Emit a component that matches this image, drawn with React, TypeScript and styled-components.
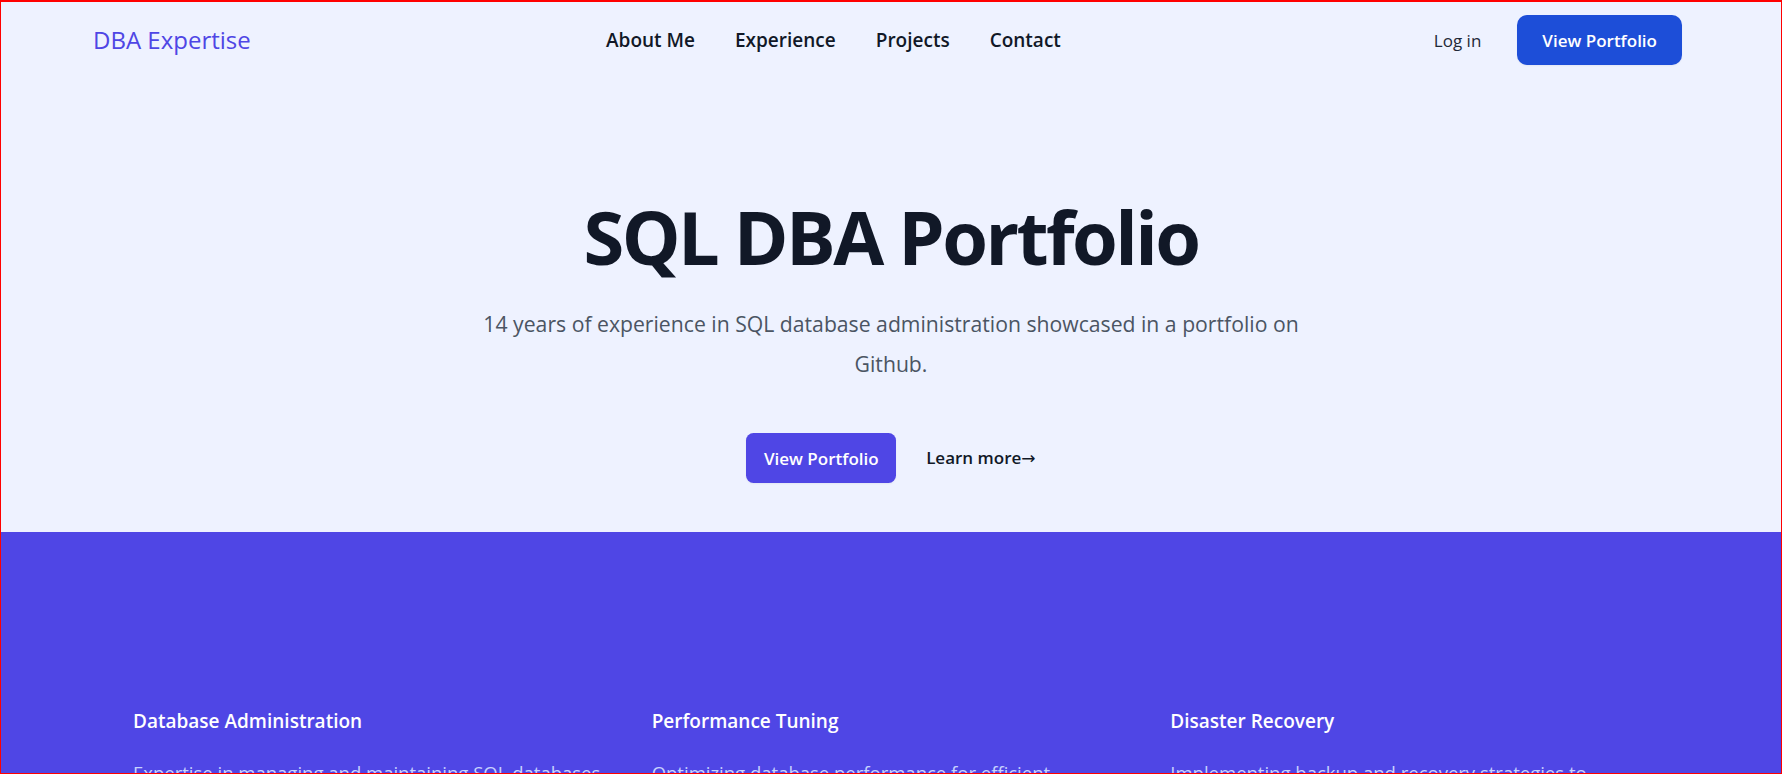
import React from "react";
import styled, { createGlobalStyle } from "styled-components";

const GlobalStyle = createGlobalStyle`
  * { box-sizing: border-box; }
  html, body { margin: 0; padding: 0; }
  body {
    font-family: "Open Sans", "Noto Sans", sans-serif;
    background: #eef2ff;
    color: #111827;
    -webkit-font-smoothing: antialiased;
  }
  body::after {
    content: "";
    position: fixed;
    inset: 0;
    border: 1px solid #ff0000;
    border-top-width: 2px;
    pointer-events: none;
    z-index: 10;
  }
`;

const Page = styled.div`
  min-height: 100vh;
`;

const Header = styled.header`
  display: grid;
  grid-template-columns: 513px auto 1fr;
  align-items: center;
  padding: 15px 100px 0 93px;
`;

const Logo = styled.a`
  font-size: 24px;
  font-weight: 500;
  color: #4f46e5;
  text-decoration: none;
  line-height: 50px;
`;

const NavLinks = styled.nav`
  display: flex;
  gap: 40px;
`;

const NavLink = styled.a`
  font-size: 19px;
  font-weight: 600;
  color: #111827;
  text-decoration: none;
`;

const RightGroup = styled.div`
  justify-self: end;
  display: flex;
  align-items: center;
  gap: 36px;
`;

const LoginLink = styled.a`
  font-size: 17px;
  font-weight: 500;
  color: #1f2937;
  text-decoration: none;
`;

const Button = styled.a<{ $variant: "blue" | "indigo" }>`
  display: inline-block;
  background: ${(p) => (p.$variant === "blue" ? "#1d4ed8" : "#4f46e5")};
  color: #ffffff;
  font-size: 17px;
  font-weight: 600;
  line-height: 25px;
  padding: 12.5px ${(p) => (p.$variant === "blue" ? "25px" : "17.5px")};
  border-radius: ${(p) => (p.$variant === "blue" ? "10px" : "7.5px")};
  text-decoration: none;
  box-shadow: 0 1px 2px rgba(0, 0, 0, 0.05);
`;

const Hero = styled.section`
  padding: 133px 24px 49px;
  text-align: center;
`;

const Title = styled.h1`
  margin: 0;
  font-size: 74px;
  line-height: 77px;
  font-weight: 700;
  letter-spacing: -0.035em;
  color: #111827;
`;

const Subtitle = styled.p`
  max-width: 840px;
  margin: 29px auto 0;
  font-size: 21.2px;
  line-height: 40px;
  color: #4b5563;
`;

const Actions = styled.div`
  margin-top: 49px;
  display: flex;
  justify-content: center;
  align-items: center;
  gap: 30px;
`;

const LearnMore = styled.a`
  font-size: 17px;
  font-weight: 600;
  line-height: 25px;
  color: #111827;
  text-decoration: none;
`;

const Arrow = styled.span`
  font-family: "DejaVu Sans", sans-serif;
  font-weight: 400;
  font-size: 17px;
`;

const Features = styled.section`
  background: #4f46e5;
  padding: 172px 133px 160px;
  display: grid;
  grid-template-columns: repeat(3, 1fr);
  gap: 40px;
`;

const Feature = styled.div``;

const FeatureTitle = styled.h3`
  margin: 0;
  font-size: 19px;
  font-weight: 600;
  line-height: 35px;
  color: #ffffff;
`;

const FeatureText = styled.p`
  margin: 16px 0 0;
  font-size: 18.5px;
  line-height: 35px;
  color: #c7d2fe;
`;

const features = [
  {
    title: "Database Administration",
    text: "Expertise in managing and maintaining SQL databases for optimal reliability and availability.",
  },
  {
    title: "Performance Tuning",
    text: "Optimizing database performance for efficient operations and fast query response.",
  },
  {
    title: "Disaster Recovery",
    text: "Implementing backup and recovery strategies to ensure data integrity and availability.",
  },
];

export default function App() {
  return (
    <Page>
      <GlobalStyle />
      <Header>
        <Logo href="#">DBA Expertise</Logo>
        <NavLinks>
          <NavLink href="#">About Me</NavLink>
          <NavLink href="#">Experience</NavLink>
          <NavLink href="#">Projects</NavLink>
          <NavLink href="#">Contact</NavLink>
        </NavLinks>
        <RightGroup>
          <LoginLink href="#">Log in</LoginLink>
          <Button href="#" $variant="blue">View Portfolio</Button>
        </RightGroup>
      </Header>
      <Hero>
        <Title>SQL DBA Portfolio</Title>
        <Subtitle>
          14 years of experience in SQL database administration showcased in a portfolio on Github.
        </Subtitle>
        <Actions>
          <Button href="#" $variant="indigo">View Portfolio</Button>
          <LearnMore href="#">
            Learn more<Arrow>→</Arrow>
          </LearnMore>
        </Actions>
      </Hero>
      <Features>
        {features.map((f) => (
          <Feature key={f.title}>
            <FeatureTitle>{f.title}</FeatureTitle>
            <FeatureText>{f.text}</FeatureText>
          </Feature>
        ))}
      </Features>
    </Page>
  );
}
